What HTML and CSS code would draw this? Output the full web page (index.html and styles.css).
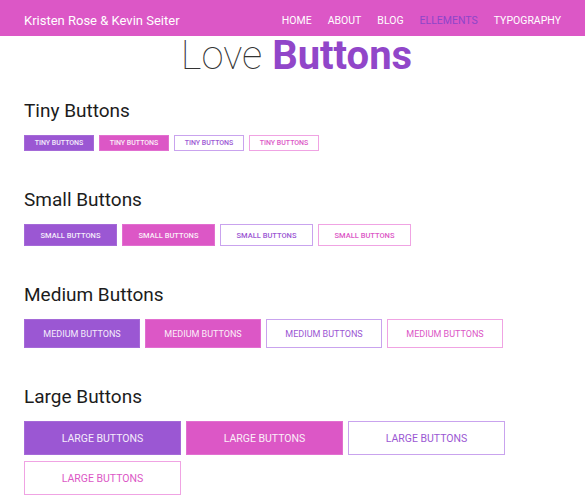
FILE: index.html
```html
<!DOCTYPE html>
<html lang="en">
<head>
<meta charset="utf-8">
<title>Love Buttons</title>
<link rel="stylesheet" href="styles.css">
</head>
<body>
<header class="topbar">
  <div class="brand">Kristen Rose &amp; Kevin Seiter</div>
  <nav class="nav">
    <a class="nav-link" href="#">HOME</a>
    <a class="nav-link" href="#">ABOUT</a>
    <a class="nav-link" href="#">BLOG</a>
    <a class="nav-link nav-link--active" href="#">ELLEMENTS</a>
    <a class="nav-link" href="#">TYPOGRAPHY</a>
  </nav>
</header>
<main class="page">
  <h1 class="title"><span class="title-light">Love</span> <span class="title-bold">Buttons</span></h1>

  <section class="group">
    <h2 class="group-title">Tiny Buttons</h2>
    <div class="btn-row">
      <a class="btn btn--tiny btn--purple" href="#">Tiny Buttons</a>
      <a class="btn btn--tiny btn--pink" href="#">Tiny Buttons</a>
      <a class="btn btn--tiny btn--purple-outline" href="#">Tiny Buttons</a>
      <a class="btn btn--tiny btn--pink-outline" href="#">Tiny Buttons</a>
    </div>
  </section>

  <section class="group">
    <h2 class="group-title">Small Buttons</h2>
    <div class="btn-row">
      <a class="btn btn--small btn--purple" href="#">Small Buttons</a>
      <a class="btn btn--small btn--pink" href="#">Small Buttons</a>
      <a class="btn btn--small btn--purple-outline" href="#">Small Buttons</a>
      <a class="btn btn--small btn--pink-outline" href="#">Small Buttons</a>
    </div>
  </section>

  <section class="group">
    <h2 class="group-title">Medium Buttons</h2>
    <div class="btn-row">
      <a class="btn btn--medium btn--purple" href="#">Medium Buttons</a>
      <a class="btn btn--medium btn--pink" href="#">Medium Buttons</a>
      <a class="btn btn--medium btn--purple-outline" href="#">Medium Buttons</a>
      <a class="btn btn--medium btn--pink-outline" href="#">Medium Buttons</a>
    </div>
  </section>

  <section class="group">
    <h2 class="group-title">Large Buttons</h2>
    <div class="btn-row">
      <a class="btn btn--large btn--purple" href="#">Large Buttons</a>
      <a class="btn btn--large btn--pink" href="#">Large Buttons</a>
      <a class="btn btn--large btn--purple-outline" href="#">Large Buttons</a>
      <a class="btn btn--large btn--pink-outline" href="#">Large Buttons</a>
    </div>
  </section>
</main>
</body>
</html>
```

FILE: styles.css
```css
* {
  box-sizing: border-box;
}

html, body {
  margin: 0;
  padding: 0;
  background: #ffffff;
}

body {
  font-family: Roboto, "Liberation Sans", sans-serif;
  color: #1c1c1c;
  overflow: hidden;
}

.topbar {
  height: 36px;
  background: #dc57c6;
  display: flex;
  align-items: center;
  justify-content: space-between;
  padding: 5px 24px 0 24px;
}

.brand {
  font-size: 13px;
  color: #ffffff;
}

.nav {
  display: flex;
  gap: 16px;
}

.nav-link {
  font-size: 10.5px;
  color: #ffffff;
  text-decoration: none;
}

.nav-link--active {
  color: #8e45c9;
}

.page {
  padding: 0 24px;
}

.title {
  margin: 0 0 23px 0;
  font-size: 40px;
  line-height: 40px;
  text-align: center;
  font-weight: 400;
  padding-left: 8px;
}

.title-light {
  font-weight: 100;
  color: #333333;
}

.title-bold {
  font-weight: 700;
  color: #9146c9;
}

.group {
  margin-bottom: 37px;
}

.group-title {
  margin: 0 0 12px 0;
  font-size: 19px;
  line-height: 24px;
  font-weight: 400;
  color: #1c1c1c;
}

.btn-row {
  display: flex;
  flex-wrap: wrap;
  gap: 6px 5px;
}

.btn {
  display: flex;
  align-items: center;
  justify-content: center;
  border: 1px solid transparent;
  text-transform: uppercase;
  text-decoration: none;
  font-weight: 500;
}

.btn--tiny {
  width: 70px;
  height: 16px;
  font-size: 7px;
}

.btn--small {
  width: 93px;
  height: 22px;
  font-size: 7.5px;
}

.btn--medium {
  width: 116px;
  height: 29px;
  font-size: 9px;
  font-weight: 400;
}

.btn--large {
  width: 157px;
  height: 34px;
  font-size: 10.5px;
  font-weight: 400;
}

.btn--purple {
  background: #9b57d3;
  border-color: #a56ad8;
  color: #f4ecfb;
}

.btn--pink {
  background: #dc57c6;
  border-color: #e26fd0;
  color: #fbeef8;
}

.btn--purple-outline {
  background: #ffffff;
  border-color: #c9a3ee;
  color: #9b57d3;
}

.btn--pink-outline {
  background: #ffffff;
  border-color: #f0a3e3;
  color: #dc57c6;
}
```
